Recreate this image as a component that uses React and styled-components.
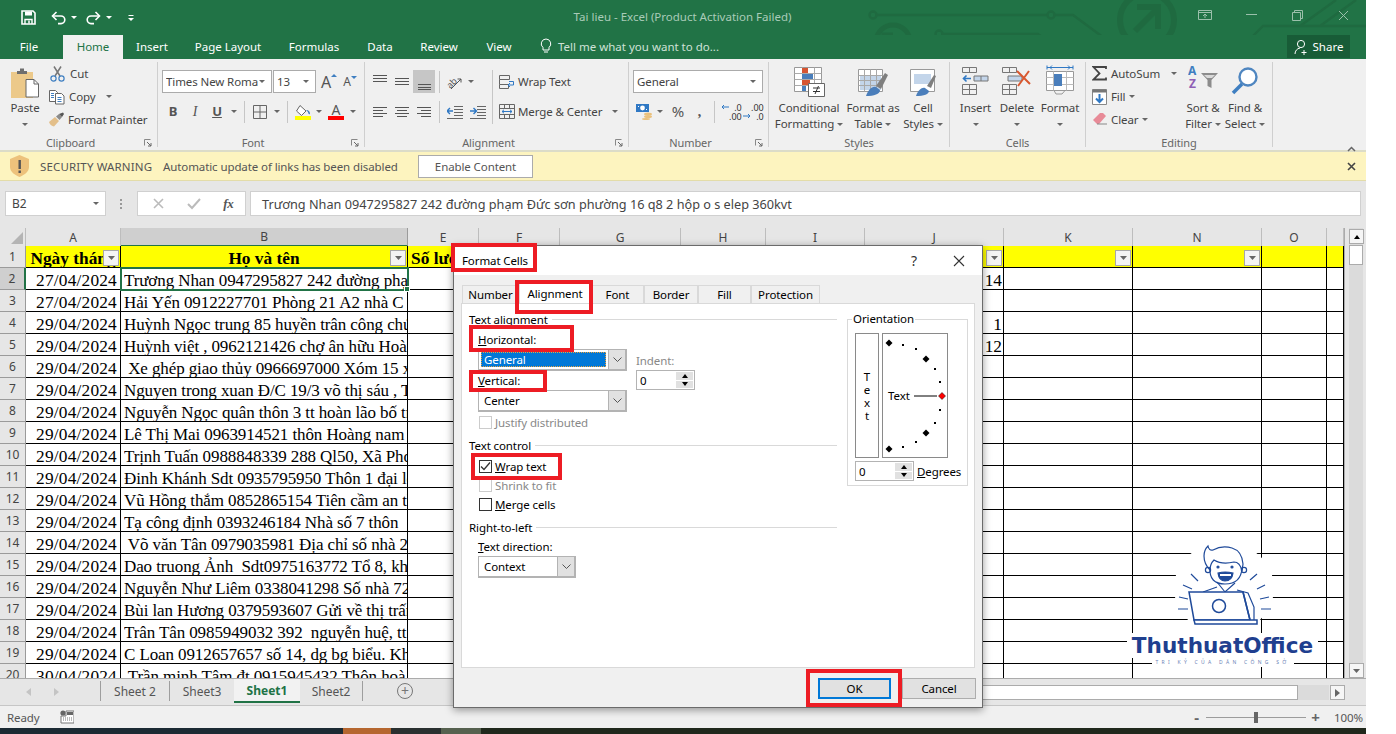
import React from "react";
import styled, { createGlobalStyle } from "styled-components";

const UI = `"Noto Sans", "Open Sans", sans-serif`;
const SERIF = `"Liberation Serif", "Times New Roman", serif`;
const GREEN = "#217346";

const Global = createGlobalStyle`
  html, body { margin: 0; padding: 0; background: #fff; overflow: hidden; }
  * { box-sizing: border-box; }
`;

const Page = styled.div`
  position: relative; width: 1396px; height: 734px; overflow: hidden; background: #fff;
  font-family: ${UI}; font-size: 11.5px; color: #444; letter-spacing: -0.1px;
`;
const Win = styled.div`display: flex; flex-direction: column; width: 1366px; height: 734px; position: relative;`;

/* ---------- title ---------- */
const TitleBar = styled.div`
  position: relative; display: flex; align-items: center; height: 35px; background: ${GREEN}; padding-left: 21px; color: #fff; flex: none;
`;
const QatBtn = styled.div`display: flex; align-items: center; width: ${p => p.$w}px; gap: 5px;`;
const QatCaret = styled.i`width: 0; height: 0; border: 3px solid transparent; border-top: 3px solid #fff; border-bottom: 0;`;
const TitleText = styled.div`
  position: absolute; left: 0; width: 1365px; top: 9px; text-align: center; color: #a9cbb8; font-size: 11.5px; letter-spacing: 0;
`;
const WinControls = styled.div`position: absolute; right: 0; top: 6px; display: flex; align-items: center; height: 18px; opacity: .55;`;
const WinBtn = styled.div`width: ${p => p.$w}px; display: flex; justify-content: center;`;
const Circuit = styled.svg`position: absolute; left: 0; top: 0; pointer-events: none;`;

const TabBar = styled.div`position: relative; display: flex; height: 24px; background: ${GREEN}; color: #fff; font-size: 11.5px; letter-spacing: 0; flex: none;`;
const RTab = styled.div`
  width: ${p => p.$w}px; display: flex; align-items: center; justify-content: center; padding-bottom: 2px;
  background: ${p => (p.$active ? "#f0f0f0" : "transparent")}; color: ${p => (p.$active ? GREEN : "#fff")};
`;
const TellMe = styled.div`display: flex; align-items: center; gap: 6px; margin-left: 13px; color: #cfe2d7; padding-bottom: 2px;`;
const Share = styled.div`
  position: absolute; left: 1287px; top: 0; width: 63px; height: 23px; background: #185c37; display: flex; align-items: center; justify-content: center; gap: 4px;
`;

/* ---------- ribbon ---------- */
const Ribbon = styled.div`display: flex; height: 93px; background: #f0f0f0; padding-top: 3px; border-bottom: 2px solid #dcdcc8; position: relative; flex: none;`;
const Group = styled.div`width: ${p => p.$w}px; height: 85px; border-right: 1px solid #cfcfcf; display: flex; flex-direction: column;`;
const GroupBody = styled.div`display: flex; height: 75px; flex: none; padding-left: ${p => p.$pl || 0}px;`;
const GroupFoot = styled.div`display: flex; align-items: center; height: 13px; flex: none; margin-top: -1px; color: #666; font-size: 11px;`;
const GroupName = styled.div`flex: 1; text-align: center;`;
const Launcher = styled.div`width: 16px; display: flex; justify-content: flex-start; padding-left: 3px;`;
const Collapse = styled.div`position: absolute; left: 1347px; top: 81px;`;

const Large = styled.div`width: ${p => p.$w}px; display: flex; flex-direction: column; align-items: center; flex: none;`;
const LargeIcon = styled.div`height: 38px; padding-top: ${p => p.$pt ?? 5}px; display: flex; justify-content: center;`;
const LargeLine = styled.div`height: 16px; line-height: 16px; display: flex; align-items: center; gap: 3px; white-space: nowrap;`;
const Caret = styled.i`
  display: inline-block; width: 0; height: 0; flex: none; margin-left: ${p => p.$ml || 0}px;
  border-left: 3px solid transparent; border-right: 3px solid transparent; border-top: 3px solid #666;
`;
const Col = styled.div`display: flex; flex-direction: column; width: ${p => (p.$w ? p.$w + "px" : "auto")}; padding-top: ${p => p.$pt || 0}px; margin-left: ${p => p.$ml || 0}px;`;
const SmallRow = styled.div`display: flex; align-items: center; height: ${p => p.$h || 23}px; gap: ${p => p.$gap ?? 4}px; white-space: nowrap; padding-left: ${p => p.$pl || 0}px;`;
const ToolRow = styled.div`display: flex; align-items: center; height: 23px; margin-top: ${p => p.$mt || 0}px;`;
const Tool = styled.div`
  width: ${p => p.$w || 22}px; height: 23px; flex: none; display: flex; align-items: center; justify-content: center; margin-left: ${p => p.$ml || 0}px;
  background: ${p => (p.$on ? "#c6c6c6" : "transparent")};
`;
const ToolSep = styled.div`width: 1px; height: ${p => p.$h || 22}px; background: #c6c6c6; margin: ${p => p.$mt || 0}px ${p => p.$m ?? 4}px 0; flex: none;`;
const Combo = styled.div`
  width: ${p => p.$w}px; height: 23px; flex: none; background: #fff; border: 1px solid #ababab; display: flex; align-items: center;
  justify-content: space-between; padding: 0 6px 0 3px; color: #444; white-space: nowrap; overflow: hidden; margin-right: ${p => p.$mr || 0}px;
`;
const ComboText = styled.span`overflow: hidden; flex: 1;`;
const Glyph = styled.span`
  font-family: ${p => (p.$serif ? SERIF : UI)}; font-weight: ${p => (p.$b ? 700 : 400)}; font-style: ${p => (p.$i ? "italic" : "normal")};
  text-decoration: ${p => (p.$u ? "underline" : "none")}; font-size: ${p => p.$s || 13}px; color: #555; line-height: 1;
`;
const GrowWrap = styled.span`display: flex; align-items: flex-start;`;
const DecGrid = styled.span`
  display: grid; grid-template-columns: 8px 1fr; font-size: 9px; line-height: 9px; color: #333; width: 18px; align-items: center; justify-items: end; letter-spacing: 0;
`;
const ColorStack = styled.span`display: flex; flex-direction: column; align-items: center; width: 16px;`;
const ColorBar = styled.i`display: block; width: 16px; height: 4px; background: #ff0000; margin-top: -1px;`;

/* ---------- warning ---------- */
const Warn = styled.div`
  display: flex; align-items: center; height: 29px; background: #fdf4bf; border-bottom: 1px solid #e3dca8; padding-left: 9px; position: relative; color: #555; font-size: 11.5px; flex: none;
`;
const WarnTitle = styled.span`margin-left: 10px; width: 123px; white-space: nowrap; letter-spacing: .15px;`;
const WarnText = styled.span`width: 255px; white-space: nowrap;`;
const EnableBtn = styled.div`width: 115px; height: 23px; background: #fff; border: 1px solid #ababab; display: flex; align-items: center; justify-content: center;`;
const WarnClose = styled.div`margin-left: auto; margin-right: 10px; display: flex;`;

/* ---------- formula bar ---------- */
const FormulaBar = styled.div`display: flex; align-items: flex-start; height: 47px; background: #e6e6e6; padding: 10px 5px 0; flex: none;`;
const NameBox = styled.div`
  width: 101px; height: 25px; background: #fff; border: 1px solid #d0d0d0; display: flex; align-items: center; justify-content: space-between; padding: 0 6px; font-size: 12px;
`;
const Dots = styled.div`width: 31px; height: 25px; display: flex; align-items: center; justify-content: center;`;
const FxBox = styled.div`
  width: 109px; height: 25px; background: #fff; border: 1px solid #d0d0d0; display: flex; align-items: center; justify-content: space-around; padding: 0 0 0 4px; margin-right: 4px;
`;
const FxText = styled.span`font-family: ${SERIF}; font-style: italic; font-size: 13px; color: #555; font-weight: 700;`;
const FormulaInput = styled.div`
  flex: 1; height: 25px; background: #fff; border: 1px solid #d0d0d0; display: flex; align-items: center; padding-left: 11px; font-size: 12.7px; letter-spacing: 0; white-space: nowrap;
`;

/* ---------- sheet ---------- */
const Sheet = styled.div`display: flex; height: 450px; overflow: hidden; background: #fff; flex: none;`;
const GridArea = styled.div`width: 1344px; overflow: hidden;`;
const COLS = "26px 95px 287px 71px 81px 121px 85px 99px 139px 129px 129px 65px 17px";
const HeadRow = styled.div`display: grid; grid-template-columns: ${COLS}; height: 18px; background: #e6e6e6;`;
const HeadCell = styled.div`
  display: flex; align-items: center; justify-content: center; font-size: 12px; color: #444;
  border-right: 1px solid ${p => (p.$sel ? "#9b9b9b" : "#bdbdbd")}; border-bottom: ${p => (p.$sel ? "2px solid " + GREEN : "1px solid #9b9b9b")};
  background: ${p => (p.$sel ? "#cfcfcf" : "transparent")};
`;
const Corner = styled.div`
  background: #e6e6e6; border-right: 1px solid #bdbdbd; border-bottom: 1px solid #9b9b9b; display: flex; align-items: flex-end; justify-content: flex-end; padding: 0 2px 2px 0;
`;
const CornerMark = styled.i`width: 0; height: 0; border-left: 12px solid transparent; border-bottom: 12px solid #b4b4b4;`;
const Row = styled.div`display: grid; grid-template-columns: ${COLS}; height: 22px;`;
const RowHead = styled.div`
  background: ${p => (p.$sel ? "#cfcfcf" : "#e6e6e6")}; border-bottom: 1px solid #9b9b9b; border-right: ${p => (p.$sel ? "2px solid " + GREEN : "1px solid #9b9b9b")};
  display: flex; align-items: center; justify-content: center; font-size: 12px; color: #444;
`;
const Cell = styled.div`
  position: relative; height: 22px; line-height: 25px; border-right: 1px solid #000; border-bottom: 1px solid #000; overflow: ${p => (p.$sel ? "visible" : "hidden")};
  white-space: pre; font-family: ${SERIF}; font-size: 17.33px; letter-spacing: ${p => p.$ls ?? 0}px; color: #000; padding: 0 ${p => p.$pr ?? 3}px 0 3px;
  text-align: ${p => p.$align || "left"}; font-weight: ${p => (p.$bold ? 700 : 400)};
  background: ${p => (p.$yellow ? "#ffff00" : "#fff")};
  ${p => p.$sel && `outline: 2px solid ${GREEN}; outline-offset: -1px; z-index: 2;`}
`;
const CellClip = styled.div`overflow: hidden; height: 21px; font-size: 17px; letter-spacing: -0.1px;`;
const FillHandle = styled.i`position: absolute; right: -3px; bottom: -3px; width: 6px; height: 6px; background: ${GREEN}; border: 1px solid #fff;`;
const FilterBtn = styled.span`
  position: absolute; right: 1px; top: 4px; width: 16px; height: 16px; background: #f4f4f4; border: 1px solid #a8a8a8; display: flex; align-items: center; justify-content: center; z-index: 1;
`;
const VScroll = styled.div`width: 22px; background: #e6e6e6; padding: 0 3px 0 4px; border-left: 1px solid #ababab;`;
const VTrack = styled.div`height: 100%; background: #dbdbdb; display: flex; flex-direction: column; padding-top: 1px;`;
const VGap = styled.div`flex: 1;`;
const ScrollBtn = styled.div`
  flex: none; width: ${p => p.$w || 15}px; height: 15px; background: #f6f6f6; border: 1px solid #ababab; display: flex; align-items: center; justify-content: center;
`;
const VThumb = styled.div`height: 20px; margin-top: 1px; background: #fff; border: 1px solid #ababab;`;

/* ---------- bottom ---------- */
const SheetTabs = styled.div`display: flex; height: 28px; background: #e6e6e6; border-top: 1px solid #ababab; border-bottom: 1px solid #c6c6c6; position: relative; flex: none;`;
const NavArea = styled.div`width: 100px; display: flex; align-items: center; padding-left: 26px; gap: 23px;`;
const TabSep = styled.div`width: 1px; height: 20px; margin-top: 2px; background: #9e9e9e; flex: none;`;
const SheetTab = styled.div`
  width: ${p => p.$w}px; height: 24px; display: flex; align-items: center; justify-content: center; font-size: 12px; flex: none; letter-spacing: 0;
  color: ${p => (p.$active ? GREEN : "#555")}; font-weight: ${p => (p.$active ? 700 : 400)};
  background: ${p => (p.$active ? "#f2f2f2" : "transparent")}; border-bottom: ${p => (p.$active ? "2px solid " + GREEN : "0")};
`;
const AddSheet = styled.div`margin-left: 34px; margin-top: 4px; width: 16px; height: 16px; border: 1.5px solid #777; border-radius: 50%; display: flex; align-items: center; justify-content: center; color: #777; font-size: 14px; line-height: 1;`;
const HScroll = styled.div`position: absolute; left: 460px; top: 6px; display: flex; width: 885px; height: 15px;`;
const HThumb = styled.div`width: 838px; height: 15px; background: #fff; border: 1px solid #ababab;`;
const HRest = styled.div`flex: 1; background: #dbdbdb; margin-right: 1px;`;

const Status = styled.div`
  display: flex; align-items: center; height: 22px; background: #f0f0f0; padding-left: 7px; font-size: 11.5px; color: #555; position: relative; flex: none;
`;
const StatusMacro = styled.div`margin-left: 20px; display: flex;`;
const ZoomBox = styled.div`position: absolute; left: 1192px; top: 0; height: 22px; display: flex; align-items: center; font-size: 11.5px;`;
const Slider = styled.div`width: 100px; height: 1px; background: #9c9c9c; margin: 0 5px; position: relative;`;
const SliderThumb = styled.i`position: absolute; left: 48px; top: -5px; width: 4px; height: 11px; background: #666;`;
const ZoomSign = styled.span`font-size: 15px; font-weight: 700; color: #666; width: 9px; text-align: center;`;
const ZoomPct = styled.span`margin-left: 14px; color: #555;`;

const Taskbar = styled.div`display: flex; height: 6px; flex: none;`;
const TaskSeg = styled.div`flex: ${p => (p.$w ? "0 0 " + p.$w + "px" : 1)}; background: ${p => p.$c};`;

/* ---------- dialog ---------- */
const Dialog = styled.div`
  position: absolute; left: 453px; top: 245px; width: 530px; height: 463px; background: #f0f0f0; border: 1px solid #6b6b6b; box-shadow: 0 2px 8px rgba(0,0,0,.4);
  color: #000; font-size: 11.5px; display: flex; flex-direction: column; z-index: 5;
`;
const DlgTitle = styled.div`height: 29px; background: #fff; display: flex; align-items: center; padding: 0 17px 0 8px; flex: none;`;
const DlgName = styled.div`flex: 1; font-size: 11.5px;`;
const DlgHelp = styled.div`font-size: 14px; color: #333; margin-right: 36px;`;
const DlgTabs = styled.div`display: flex; align-items: flex-end; height: 28px; padding-left: 8px; flex: none;`;
const DlgTab = styled.div`
  width: ${p => p.$w}px; flex: none; display: flex; align-items: center; justify-content: center;
  height: ${p => (p.$active ? 21 : 18)}px; background: ${p => (p.$active ? "#fff" : "#f0f0f0")};
  border: 1px solid #d9d9d9; border-bottom: 0;
`;
const Pane = styled.div`
  margin-left: 7px; width: 514px; height: 365px; background: #fff; border: 1px solid #d9d9d9; padding: 7px 7px 0 7px; display: flex; flex: none;
`;
const PaneLeft = styled.div`width: 368px; flex: none;`;
const Legend = styled.div`display: flex; align-items: center; height: 16px; gap: 4px; margin-top: ${p => p.$mt || 0}px;`;
const LegendLine = styled.i`flex: 1; height: 1px; background: #d9d9d9;`;
const Lbl = styled.div`
  height: 16px; line-height: 16px; padding-left: ${p => p.$pl ?? 9}px; margin-top: ${p => p.$mt || 0}px; color: ${p => (p.$dis ? "#888" : "#000")}; white-space: nowrap;
`;
const FieldRow = styled.div`display: flex; align-items: flex-start; height: 24px;`;
const Select = styled.div`
  width: ${p => p.$w}px; height: 22px; margin-left: 9px; margin-top: ${p => p.$mt || 0}px; border: 2px solid #b3b3b3; border-width: 1px 2px 2px 1px; display: flex; align-items: stretch; background: #fff; flex: none;
`;
const SelectText = styled.div`
  flex: 1; margin: 2px; display: flex; align-items: center; padding-left: 3px;
  ${p => p.$hl && "background:#0078d7;color:#fff;outline:1px dotted #e8a33d;outline-offset:-1px;"}
`;
const SelectArrow = styled.div`width: 17px; background: #e1e1e1; border-left: 1px solid #b3b3b3; display: flex; align-items: center; justify-content: center;`;
const Spin = styled.div`
  width: ${p => p.$w}px; height: 20px; border: 1px solid #b3b3b3; background: #fff; display: flex; align-items: stretch; flex: none; padding-left: 3px; margin-top: ${p => p.$mt || 0}px;
`;
const SpinVal = styled.div`flex: 1; display: flex; align-items: center;`;
const SpinBtns = styled.div`width: 17px; display: flex; flex-direction: column; margin: 1px; gap: 1px;`;
const SpinBtn = styled.div`flex: 1; background: #e1e1e1; display: flex; align-items: center; justify-content: center;`;
const Arrow = styled.i`
  width: 0; height: 0; border-left: 3.5px solid transparent; border-right: 3.5px solid transparent;
  ${p => (p.$up ? "border-bottom: 4px solid #000;" : "border-top: 4px solid #000;")}
`;
const IndentCol = styled.div`margin-left: 9px; margin-top: 5px;`;
const CheckRow = styled.div`display: flex; align-items: center; gap: 3px; height: 19px; padding-left: 10px; margin-top: ${p => p.$mt || 0}px; color: ${p => (p.$dis ? "#888" : "#000")};`;
const Check = styled.div`width: 13px; height: 13px; border: 1px solid ${p => (p.$dis ? "#ccc" : "#333")}; background: #fff; display: flex; align-items: center; justify-content: center; flex: none;`;
const OrientBox = styled.div`position: relative; margin-left: 10px; margin-top: 8px; width: 121px; height: 167px; border: 1px solid #d9d9d9; padding: 13px 7px 0;`;
const OrientLegend = styled.div`position: absolute; left: 4px; top: -9px; background: #fff; padding: 0 1px;`;
const OrientTop = styled.div`display: flex; gap: 3px;`;
const VertText = styled.div`
  width: 24px; height: 125px; border: 1px solid #8a8a8a; display: flex; flex-direction: column; align-items: center; justify-content: center; line-height: 13px;
`;
const Dial = styled.svg`display: block; width: 66px; height: 125px; border: 1px solid #8a8a8a;`;
const DegRow = styled.div`display: flex; align-items: center; gap: 3px; margin-top: 3px;`;
const DlgFoot = styled.div`flex: 1; display: flex; justify-content: flex-end; padding: 10px 6px 0 0; gap: 11px;`;
const DlgBtn = styled.div`
  width: ${p => p.$w}px; height: 21px; background: #e1e1e1; border: ${p => (p.$def ? "2px solid #0078d7" : "1px solid #adadad")}; display: flex; align-items: center; justify-content: center;
`;

/* ---------- annotation ---------- */
const Mark = styled.div`
  position: absolute; left: ${p => p.$x}px; top: ${p => p.$y}px; width: ${p => p.$w}px; height: ${p => p.$h}px; border: 4px solid #ed1c24; z-index: 6;
`;

/* ---------- logo ---------- */
const Logo = styled.div`position: absolute; left: 1127px; top: 540px; width: 191px; display: flex; flex-direction: column; align-items: center; z-index: 3; color: #1f3f8f;`;
const LogoArt = styled.svg`display: block;`;
const LogoWord = styled.div`
  width: 191px; height: 25px; line-height: 25px; margin-top: 1px; text-align: center; background: #fff; font-family: "DejaVu Sans", sans-serif; font-weight: 700; font-size: 21.6px; letter-spacing: 0; white-space: nowrap;
`;
const LogoTag = styled.div`
  width: 142px; height: 9px; line-height: 9px; background: #fff; text-align: center; font-family: "Noto Sans", sans-serif; font-size: 5px; letter-spacing: 3.3px; color: #6a7fb5; white-space: nowrap;
`;

/* ---------- icons ---------- */
const Svg = ({ w = 16, h = 16, children }) => <svg width={w} height={h} viewBox={`0 0 ${w} ${h}`} fill="none">{children}</svg>;

const Lines = ({ rows, w = 16, h = 16, c = "#555" }) => (
  <Svg w={w} h={h}>{rows.map((r, i) => <path key={i} d={`M${r[0]} ${r[2]}.5H${r[1]}`} stroke={r[3] || c} />)}</Svg>
);
const SaveIc = () => (
  <Svg w={15} h={15}>
    <path d="M1 1h11l2 2v11H1z" stroke="#fff" strokeWidth="1.6" />
    <path d="M4 1.5h7v4H4z" fill="#fff" /><path d="M4 14V9.5h7V14" stroke="#fff" strokeWidth="1.4" /><path d="M8 10.5v3" stroke="#fff" strokeWidth="1.5" />
  </Svg>
);
const FlipSvg = styled.svg`transform: ${p => (p.$flip ? "scaleX(-1)" : "none")};`;
const UndoIc = ({ flip }) => (
  <FlipSvg $flip={flip} width="15" height="14" viewBox="0 0 15 14" fill="none">
    <path d="M2 5h8a3.6 3.6 0 0 1 0 7.6H7" stroke="#fff" strokeWidth="1.6" /><path d="M5.5 1 1.5 5l4 4" stroke="#fff" strokeWidth="1.6" />
  </FlipSvg>
);
const QatMore = () => <Svg w={8} h={8}><path d="M1.5 1.5h5" stroke="#fff" /><path d="M1 4h6L4 7z" fill="#fff" /></Svg>;
const PasteIc = () => (
  <Svg w={30} h={32}>
    <path d="M1 5h22v26H1z" fill="#ecc98a" /><path d="M7 4h3V1.5h4V4h3v3H7z" fill="#6e6e6e" />
    <path d="M16 12.5h8l4.5 4.5v13H16z" fill="#fff" stroke="#666" /><path d="M24 12.5V17h4.5" stroke="#666" />
  </Svg>
);
const CutIc = () => (
  <Svg w={15} h={16}>
    <path d="M4 0.5 10 10M11 0.5 5 10" stroke="#777" strokeWidth="1.5" />
    <circle cx="3.5" cy="12.5" r="2.6" stroke="#3f7fc1" strokeWidth="1.2" /><circle cx="11.5" cy="12.5" r="2.6" stroke="#3f7fc1" strokeWidth="1.2" />
  </Svg>
);
const CopyIc = () => (
  <Svg w={16} h={16}>
    <path d="M.5 1.5h6l2 2v9H.5z" fill="#fff" stroke="#666" /><path d="M6.5 4.5h6l2.5 2.5v8H6.5z" fill="#fff" stroke="#666" />
    <path d="M8.5 8.5h4M8.5 10.5h4M8.5 12.5h4" stroke="#3f7fc1" /><path d="M2 4.5h3M2 6.5h3M2 8.5h3" stroke="#3f7fc1" />
  </Svg>
);
const PainterIc = () => (
  <Svg w={17} h={15}>
    <path d="M1 10 7 5l4 4-5 5.5C4 14 2 13 1 10z" fill="#e3bf8a" /><path d="M8 4.5 11 2l3 3-2.5 3z" fill="#8a8a8a" /><path d="M11 2 15 .5l1 1.5-2 3z" fill="#555" />
  </Svg>
);
const LaunchIc = () => <Svg w={8} h={8}><path d="M.5 6.5v-6h6" stroke="#888" /><path d="M3 3l4 4M7 4v3H4" stroke="#666" /></Svg>;
const GrowA = ({ down }) => (
  <GrowWrap>
    <Glyph $s={down ? 12 : 16}>A</Glyph>
    <Svg w={6} h={4}><path d={down ? "M0 0h6L3 3z" : "M0 3h6L3 0z"} fill="#3f7fc1" /></Svg>
  </GrowWrap>
);
const BordersIc = () => <Svg w={14} h={14}><path d="M.5.5h13v13H.5zM7 .5v13M.5 7h13" stroke="#666" /></Svg>;
const FillIc = () => (
  <Svg w={17} h={16}>
    <path d="M5 1.5 11 7l-4.5 4.5L1.5 7z" fill="#fff" stroke="#666" /><path d="M11 6c3 0 4 2 4 4-1 1-2-1-2-2" fill="#3f7fc1" />
    <rect x="0" y="12" width="16" height="4" fill="#ffff00" />
  </Svg>
);
const ColorIc = () => <ColorStack><Glyph $s={14}>A</Glyph><ColorBar /></ColorStack>;
const OrientIc = () => (
  <Svg w={18} h={16}>
    <text x="1" y="13" fontSize="9" fill="#555" fontFamily="Noto Sans" transform="rotate(-45 5 10)">ab</text>
    <path d="M5 15 15 5M15 5h-3.5M15 5v3.5" stroke="#555" />
  </Svg>
);
const IndentDec = () => (
  <Svg w={16} h={14}><path d="M7 1.5h9M7 4.5h9M7 7.5h9M7 10.5h9" stroke="#666" /><path d="M0 13.5h16" stroke="#666" /><path d="M0 6h6M3 3 0 6l3 3" stroke="#2f78c4" strokeWidth="1.4" /></Svg>
);
const IndentInc = () => (
  <Svg w={16} h={14}><path d="M7 1.5h9M7 4.5h9M7 7.5h9M7 10.5h9" stroke="#666" /><path d="M0 13.5h16" stroke="#666" /><path d="M0 6h6M3.5 3 6.5 6l-3 3" stroke="#2f78c4" strokeWidth="1.4" /></Svg>
);
const WrapIc = () => (
  <Svg w={16} h={16}>
    <path d="M.5 1.5h10v4H.5zM.5 10.5h9v4H.5z" stroke="#666" /><path d="M.5 5.5v5" stroke="#666" />
    <path d="M10 7.5h4.5V11H9M11 9l-2 2 2 2" stroke="#2f78c4" />
  </Svg>
);
const MergeIc = () => (
  <Svg w={16} h={15}>
    <path d="M.5.5h15v14H.5zM.5 4.5h15M.5 10.5h15M5.5.5v4M10.5.5v4M5.5 10.5v4M10.5 10.5v4" stroke="#666" />
    <path d="M3 7.5h10M5 5.8 3 7.5l2 1.7M11 5.8l2 1.7-2 1.7" stroke="#2f78c4" />
  </Svg>
);
const CurrencyIc = () => (
  <Svg w={17} h={17}>
    <path d="M0 1h13v8H0z" fill="#2f78c4" /><circle cx="6.5" cy="5" r="2.4" fill="#fff" /><path d="M2 3h1v1H2zM10 6h1v1h-1z" fill="#fff" />
    <ellipse cx="12" cy="11" rx="4" ry="1.6" fill="#eac17d" /><ellipse cx="12" cy="13.5" rx="4" ry="1.6" fill="#eac17d" /><ellipse cx="10" cy="16" rx="4" ry="1" fill="#eac17d" />
  </Svg>
);
const DecIc = ({ more }) => (
  <DecGrid>
    {more
      ? <><i /><span>.00</span><Svg w={8} h={6}><path d="M0 3h7M5 1l2 2-2 2" stroke="#2f78c4" /></Svg><span>.0</span></>
      : <><Svg w={8} h={6}><path d="M1 3h7M3 1 1 3l2 2" stroke="#2f78c4" /></Svg><span>.0</span><i /><span>.00</span></>}
  </DecGrid>
);
const CondIc = () => (
  <Svg w={31} h={30}>
    <path d="M.5.5h27v24H.5z" fill="#fff" stroke="#999" />
    <path d="M.5 6.5h27M.5 12.5h27M.5 18.5h27M8.5.5v24M20.5.5v24" stroke="#aaa" />
    <path d="M8 1h6v5H8zM8 13h8v5H8z" fill="#d65532" /><path d="M8 7h11v5H8zM8 19h4v5H8z" fill="#4a7ebb" />
    <path d="M14.5 16.5h16v13h-16z" fill="#fff" stroke="#666" /><path d="M19 21h7M19 24.5h7M24.5 19l-3.5 8" stroke="#333" />
  </Svg>
);
const TableIc = () => (
  <Svg w={31} h={30}>
    <path d="M.5 2.5h24v22H.5z" fill="#fff" stroke="#999" /><path d="M2 9h21v14H2z" fill="#c3d5ea" />
    <path d="M.5 8.5h24M.5 13.5h24M.5 18.5h24M6.5 2.5v22M12.5 2.5v22M18.5 2.5v22" stroke="#a9a9a9" />
    <path d="M18 19 27 6l3 2-7 14z" fill="#7f7f7f" /><path d="M8 29c2-6 6-10 10-9l4 3c0 4-6 6-14 6z" fill="#4a7ebb" />
  </Svg>
);
const StylesIc = () => (
  <Svg w={26} h={30}>
    <path d="M.5 2.5h24v22H.5z" fill="#fff" stroke="#999" /><path d="M4 7h17v10H4z" fill="#c3d5ea" />
    <path d="M17 19 24 8l2 1-5 12z" fill="#7f7f7f" /><path d="M6 29c2-6 6-9 9-8l4 3c0 3-5 5-13 5z" fill="#4a7ebb" />
  </Svg>
);
const InsertIc = () => (
  <Svg w={27} h={28}>
    <path d="M.5.5h14v5H.5zM7.5.5v5M.5 17.5h14v10H.5zM.5 22.5h14M7.5 17.5v10" stroke="#777" />
    <path d="M12 9h14v5H12zM19 9v5" fill="#c3d5ea" stroke="#777" /><path d="M1 11.5h8M4.5 8.5l-3 3 3 3" stroke="#2f78c4" strokeWidth="1.6" />
  </Svg>
);
const DeleteIc = () => (
  <Svg w={30} h={28}>
    <path d="M.5.5h14v5H.5zM7.5.5v5M.5 17.5h14v10H.5zM.5 22.5h14M7.5 17.5v10" stroke="#777" />
    <path d="M6 9h14v5H6z" fill="#c3d5ea" stroke="#777" />
    <path d="M15 4 28 17M27 4 16 19" stroke="#d9582f" strokeWidth="2" />
  </Svg>
);
const FormatIc = () => (
  <Svg w={28} h={30}>
    <path d="M1 2.5h26M1 .5v4M27 .5v4M4 2.5l2-2M4 2.5l2 2M24 2.5l-2-2M24 2.5l-2 2" stroke="#2f78c4" />
    <path d="M.5 6.5h27v19H.5z" fill="#fff" stroke="#999" /><path d="M7.5 6.5v19M20.5 6.5v19M.5 12.5h27M.5 19.5h27" stroke="#bbb" />
    <path d="M8 9h8v12H8z" fill="#4a7ebb" /><path d="M8 25.5 10 29h6l3-3.5" stroke="#999" />
  </Svg>
);
const SigmaIc = () => <Svg w={15} h={15}><path d="M14 3V1H1.5l6 6.5-6 6H14v-2" stroke="#444" strokeWidth="1.8" /></Svg>;
const FillDownIc = () => (
  <Svg w={15} h={16}><path d="M.5.5h14v15H.5z" fill="#fff" stroke="#888" /><path d="M.5.5h14v3H.5z" fill="#777" /><path d="M7.5 5v8M4 9.5l3.5 3.5L11 9.5" stroke="#2f78c4" strokeWidth="2" /></Svg>
);
const EraserIc = () => (
  <Svg w={15} h={14}><path d="M1 8 8 1h3l3 3-7 8H5z" fill="#e88b98" /><path d="M5 12h10" stroke="#888" /></Svg>
);
const SortIc = () => (
  <Svg w={31} h={24}>
    <text x="0" y="10" fontSize="12" fontWeight="700" fill="#3f7fc1" fontFamily="Noto Sans">A</text>
    <text x="1" y="23" fontSize="12" fontWeight="700" fill="#8e5fb5" fontFamily="Noto Sans">Z</text>
    <path d="M13 8h17l-6.5 7v8l-4-2v-6z" fill="#8c8c8c" /><path d="M16 10h11l-3 3h-5z" fill="#d9d9d9" />
  </Svg>
);
const FindIc = () => (
  <Svg w={28} h={28}><circle cx="17" cy="10" r="8.5" fill="#fff" stroke="#4f86c0" strokeWidth="2.4" /><path d="M11 17 2 26" stroke="#3f7fc1" strokeWidth="3.5" /></Svg>
);
const ShieldIc = () => (
  <Svg w={21} h={22}>
    <path d="M10.5 0 20 4v8c0 5-5 8-9.5 10C6 20 1 17 1 12V4z" fill="#edc27c" />
    <path d="M9.5 5h2.4v9H9.5zM9.5 15.5h2.4V18H9.5z" fill="#555" />
  </Svg>
);
const X = ({ s = 10, c = "#555", w = 1.4 }) => <Svg w={s} h={s}><path d={`M1 1 ${s - 1} ${s - 1}M${s - 1} 1 1 ${s - 1}`} stroke={c} strokeWidth={w} /></Svg>;
const Tick = ({ c = "#bbb" }) => <Svg w={14} h={12}><path d="M1 6l4 4 8-9" stroke={c} strokeWidth="2" /></Svg>;
const SmallTick = () => <Svg w={11} h={9}><path d="M1 4.5l3 3 6-7" stroke="#333" strokeWidth="1.3" /></Svg>;
const Bulb = () => <Svg w={12} h={16}><path d="M6 1a4.8 4.8 0 0 0-3 8.5V12h6V9.5A4.8 4.8 0 0 0 6 1zM4 14h4" stroke="#fff" /></Svg>;
const ShareIc = () => <Svg w={15} h={16}><circle cx="7" cy="5" r="3.6" stroke="#fff" /><path d="M1 15c0-3 2-5.5 5-6M10 11v5M7.5 13.5h5" stroke="#fff" /></Svg>;
const MiniCaret = () => <Svg w={7} h={4}><path d="M0 0h7L3.5 4z" fill="#666" /></Svg>;
const SideCaret = ({ left, c = "#666" }) => <Svg w={5} h={8}><path d={left ? "M5 0v8L0 4z" : "M0 0v8l5-4z"} fill={c} /></Svg>;
const Chevron = () => <Svg w={9} h={5}><path d="M.5.5 4.5 4.5l4-4" stroke="#555" /></Svg>;
const CollapseIc = () => <Svg w={9} h={6}><path d="M1 5l3.5-3.5L8 5" stroke="#666" strokeWidth="1.5" /></Svg>;
const MacroIc = () => (
  <Svg w={14} h={14}><circle cx="3" cy="3" r="2.6" fill="#666" /><path d="M6 1h8v12H1V6h5z" fill="#fff" stroke="#777" /><path d="M3 8h9M3 10h9" stroke="#777" strokeDasharray="1 1" /><path d="M7 2h6v3H7z" fill="#666" /></Svg>
);

const CircuitArt = () => (
  <Circuit width="1366" height="52" viewBox="0 0 1366 52" fill="none" stroke="#1f6a40" strokeWidth="2.4">
    <circle cx="873" cy="15" r="3.5" /><path d="M877 15h170M1055 15h18l50 37" />
    <circle cx="1051" cy="15" r="3.5" />
    <circle cx="939" cy="34" r="3.5" /><path d="M943 34h95l24 18" />
    <path d="M976 52l13-9h87M1084 43h16l18 9" /><circle cx="1080" cy="44" r="3.5" />
    <circle cx="893" cy="42" r="17" strokeWidth="5" /><path d="M885 35l14 14M884 44v-9h9" strokeWidth="5" />
    <circle cx="1147" cy="20" r="27" strokeWidth="6" /><path d="M1135 31l23-23M1137 7h21v22" strokeWidth="6" />
    <path d="M1237 52l26-26h103M1320 26l36-26M1300 26l36-26" />
  </Circuit>
);

const LogoGraphic = () => (
  <LogoArt width="191" height="92" viewBox="-3 0 191 92" fill="none" stroke="#1f4a9a" strokeWidth="1.2">
    <ellipse cx="94" cy="48" rx="50" ry="46" fill="#fff" stroke="none" />
    <path d="M74 16Q74 10 78 6Q79 11 83 10Q92 5 102 8Q112 11 113 24L112 31Q110 22 104 22Q92 25 84 20Q80 24 80 30Q74 24 74 16Z" fill="#fff" />
    <path d="M80 28Q79 44 95 44Q111 44 112 28" />
    <circle cx="78" cy="30" r="2.6" /><circle cx="114" cy="30" r="2.6" />
    <path d="M88 33Q95 31 103 33Q102 41 95 41Q89 41 88 33Z" fill="#1f4a9a" /><path d="M90 34h11v2H90z" fill="#fff" stroke="none" />
    <circle cx="88" cy="27" r="1" fill="#1f4a9a" /><circle cx="102" cy="27" r="1" fill="#1f4a9a" />
    <path d="M87 42l8 10 10-9M73 52l14-5M107 50l11 3 6 14v16" />
    <path d="M59 52h54l7 28H64z" fill="#fff" strokeWidth="1.5" /><path d="M64 80h63v4H65z" fill="#fff" strokeWidth="1.5" />
    <path d="M113 52l7 28" strokeWidth="1.5" /><circle cx="89" cy="66" r="6.5" strokeWidth="1.5" />
    <path d="M61 34l7 7M53 45l9 4M49 57l9 2M48 69h10M127 34l-7 6M135 45l-8 4M139 57l-9 2M141 69h-10" />
  </LogoArt>
);

/* ---------- data ---------- */
const people = [
  ["27/04/2024", "Trương Nhan 0947295827 242 đường phạm Đức sơn phường 16 q8 2 hộp o s elep 360kvt", "14"],
  ["27/04/2024", "Hải Yến 0912227701 Phòng 21 A2 nhà C", ""],
  ["29/04/2024", "Huỳnh Ngọc trung 85 huyền trân công chúa", "1"],
  ["29/04/2024", "Huỳnh việt , 0962121426 chợ ân hữu Hoài", "12"],
  ["29/04/2024", " Xe ghép giao thủy 0966697000 Xóm 15 xã", ""],
  ["29/04/2024", "Nguyen trong xuan Đ/C 19/3 võ thị sáu , TP", ""],
  ["29/04/2024", "Nguyễn Ngọc quân thôn 3 tt hoàn lão bố trạch", ""],
  ["29/04/2024", "Lê Thị Mai 0963914521 thôn Hoàng nam", ""],
  ["29/04/2024", "Trịnh Tuấn 0988848339 288 Ql50, Xã Phong", ""],
  ["29/04/2024", "Đinh Khánh Sdt 0935795950 Thôn 1 đại lộc", ""],
  ["29/04/2024", "Vũ Hồng thắm 0852865154 Tiên cầm an thi", ""],
  ["29/04/2024", "Tạ công định 0393246184 Nhà số 7 thôn", ""],
  ["29/04/2024", " Võ văn Tân 0979035981 Địa chỉ số nhà 2", ""],
  ["29/04/2024", "Dao truong Ảnh  Sdt0975163772 Tổ 8, khu", ""],
  ["29/04/2024", "Nguyễn Như Liêm 0338041298 Số nhà 72", ""],
  ["29/04/2024", "Bùi lan Hương 0379593607 Gửi về thị trấn", ""],
  ["29/04/2024", "Trân Tân 0985949032 392  nguyễn huệ, tt", ""],
  ["29/04/2024", "C Loan 0912657657 số 14, dg bg biểu. Khu", ""],
  ["30/04/2024", " Trần minh Tâm đt 0915945432 Thôn hoà", ""],
];
const colNames = ["A", "B", "E", "F", "G", "H", "I", "J", "K", "N", "O", ""];
const marks = [
  [451, 243, 86, 29], [515, 280, 78, 34], [469, 325, 105, 27], [469, 370, 78, 22], [471, 453, 91, 27], [806, 669, 96, 38],
];
const dots = [[20, 11], [33, 15], [52, 35], [57, 48], [57, 76], [52, 89], [33, 108], [20, 113]];
const diamonds = [[6, 9], [43, 25], [43, 99], [6, 115]];

const Filter = () => <FilterBtn><MiniCaret /></FilterBtn>;

export default function App() {
  return (
    <Page>
      <Global />
      <Win>
        <TitleBar>
          <CircuitArt />
          <QatBtn $w={30}><SaveIc /></QatBtn>
          <QatBtn $w={35}><UndoIc /><QatCaret /></QatBtn>
          <QatBtn $w={41}><UndoIc flip /><QatCaret /></QatBtn>
          <QatBtn $w={12}><QatMore /></QatBtn>
          <TitleText>Tai lieu - Excel (Product Activation Failed)</TitleText>
          <WinControls>
            <WinBtn $w={46}><Svg w={14} h={10}><path d="M.5.5h13v9H.5zM.5 2.5h13M7 8V4M5 6l2-2 2 2" stroke="#fff" /></Svg></WinBtn>
            <WinBtn $w={46}><Svg w={11} h={2}><path d="M0 .5h11" stroke="#fff" /></Svg></WinBtn>
            <WinBtn $w={46}><Svg w={11} h={11}><path d="M.5 2.5h8v8h-8zM2.5 2.5v-2h8v8h-2" stroke="#fff" /></Svg></WinBtn>
            <WinBtn $w={46}><X s={11} c="#fff" w={1} /></WinBtn>
          </WinControls>
        </TitleBar>
        <TabBar>
          <RTab $w={58}>File</RTab>
          <RTab $w={5} />
          <RTab $w={60} $active>Home</RTab>
          <RTab $w={58}>Insert</RTab>
          <RTab $w={94}>Page Layout</RTab>
          <RTab $w={78}>Formulas</RTab>
          <RTab $w={54}>Data</RTab>
          <RTab $w={64}>Review</RTab>
          <RTab $w={56}>View</RTab>
          <TellMe><Bulb />Tell me what you want to do...</TellMe>
          <Share><ShareIc />Share</Share>
        </TabBar>
        <Ribbon>
          <Group $w={158}>
            <GroupBody $pl={2}>
              <Large $w={46}>
                <LargeIcon $pt={5}><PasteIc /></LargeIcon>
                <LargeLine>Paste</LargeLine>
                <LargeLine><Caret /></LargeLine>
              </Large>
              <Col>
                <SmallRow $h={23} $gap={5} $pl={2}><CutIc />Cut</SmallRow>
                <SmallRow $h={23} $gap={4} $pl={1}><CopyIc />Copy<Caret $ml={6} /></SmallRow>
                <SmallRow $h={22} $gap={3} $pl={0}><PainterIc />Format Painter</SmallRow>
              </Col>
            </GroupBody>
            <GroupFoot><GroupName>Clipboard</GroupName><Launcher><LaunchIc /></Launcher></GroupFoot>
          </Group>

          <Group $w={207}>
            <GroupBody $pl={4}>
              <Col $pt={8}>
                <ToolRow>
                  <Combo $w={110} $mr={1}><ComboText>Times New Roma</ComboText><Caret /></Combo>
                  <Combo $w={43}><ComboText>13</ComboText><Caret /></Combo>
                  <Tool $w={22} $ml={2}><GrowA /></Tool>
                  <Tool $w={20}><GrowA down /></Tool>
                </ToolRow>
                <ToolRow $mt={7}>
                  <Tool><Glyph $b $s={13}>B</Glyph></Tool>
                  <Tool><Glyph $i $serif $s={14}>I</Glyph></Tool>
                  <Tool><Glyph $u $b $s={13}>U</Glyph></Tool>
                  <Tool $w={12}><Caret /></Tool>
                  <ToolSep />
                  <Tool><BordersIc /></Tool>
                  <Tool $w={12}><Caret /></Tool>
                  <ToolSep />
                  <Tool><FillIc /></Tool>
                  <Tool $w={10}><Caret /></Tool>
                  <Tool $w={24}><ColorIc /></Tool>
                  <Tool $w={10}><Caret /></Tool>
                </ToolRow>
              </Col>
            </GroupBody>
            <GroupFoot><GroupName>Font</GroupName><Launcher><LaunchIc /></Launcher></GroupFoot>
          </Group>

          <Group $w={264}>
            <GroupBody $pl={4}>
              <Col $pt={8}>
                <ToolRow>
                  <Tool><Lines rows={[[1, 15, 1], [1, 15, 4], [1, 15, 7]]} /></Tool>
                  <Tool><Lines rows={[[1, 15, 4], [1, 15, 7], [1, 15, 10]]} /></Tool>
                  <Tool $on><Lines rows={[[2, 15, 10], [2, 15, 13], [2, 15, 15]]} /></Tool>
                  <ToolSep />
                  <Tool><OrientIc /></Tool>
                  <Tool $w={10}><Caret /></Tool>
                </ToolRow>
                <ToolRow $mt={7}>
                  <Tool><Lines rows={[[1, 15, 3], [1, 11, 6], [1, 15, 9], [1, 11, 12]]} /></Tool>
                  <Tool><Lines rows={[[1, 15, 3], [3, 13, 6], [1, 15, 9], [3, 13, 12]]} /></Tool>
                  <Tool><Lines rows={[[1, 15, 3], [5, 15, 6], [1, 15, 9], [5, 15, 12]]} /></Tool>
                  <ToolSep />
                  <Tool><IndentDec /></Tool>
                  <Tool $w={23}><IndentInc /></Tool>
                </ToolRow>
              </Col>
              <ToolSep $h={54} $m={3} $mt={8} />
              <Col $pt={8} $ml={3}>
                <ToolRow><SmallRow $gap={3}><WrapIc />Wrap Text</SmallRow></ToolRow>
                <ToolRow $mt={7}><SmallRow $gap={3}><MergeIc />Merge &amp; Center<Caret $ml={7} /></SmallRow></ToolRow>
              </Col>
            </GroupBody>
            <GroupFoot><GroupName>Alignment</GroupName><Launcher><LaunchIc /></Launcher></GroupFoot>
          </Group>

          <Group $w={140}>
            <GroupBody $pl={4}>
              <Col $pt={8}>
                <ToolRow><Combo $w={130}><ComboText>General</ComboText><Caret /></Combo></ToolRow>
                <ToolRow $mt={7}>
                  <Tool><CurrencyIc /></Tool>
                  <Tool $w={10}><Caret /></Tool>
                  <Tool $ml={2}><Glyph $s={15}>%</Glyph></Tool>
                  <Tool $w={21}><Glyph $b $s={14} $serif>,</Glyph></Tool>
                  <ToolSep />
                  <Tool><DecIc /></Tool>
                  <Tool><DecIc more /></Tool>
                </ToolRow>
              </Col>
            </GroupBody>
            <GroupFoot><GroupName>Number</GroupName><Launcher><LaunchIc /></Launcher></GroupFoot>
          </Group>

          <Group $w={181}>
            <GroupBody $pl={1}>
              <Large $w={78}><LargeIcon><CondIc /></LargeIcon><LargeLine>Conditional</LargeLine><LargeLine>Formatting<Caret /></LargeLine></Large>
              <Large $w={50}><LargeIcon><TableIc /></LargeIcon><LargeLine>Format as</LargeLine><LargeLine>Table<Caret /></LargeLine></Large>
              <Large $w={50}><LargeIcon><StylesIc /></LargeIcon><LargeLine>Cell</LargeLine><LargeLine>Styles<Caret /></LargeLine></Large>
            </GroupBody>
            <GroupFoot><GroupName>Styles</GroupName></GroupFoot>
          </Group>

          <Group $w={136}>
            <GroupBody $pl={5}>
              <Large $w={41}><LargeIcon><InsertIc /></LargeIcon><LargeLine>Insert</LargeLine><LargeLine><Caret /></LargeLine></Large>
              <Large $w={42}><LargeIcon><DeleteIc /></LargeIcon><LargeLine>Delete</LargeLine><LargeLine><Caret /></LargeLine></Large>
              <Large $w={44}><LargeIcon $pt={3}><FormatIc /></LargeIcon><LargeLine>Format</LargeLine><LargeLine><Caret /></LargeLine></Large>
            </GroupBody>
            <GroupFoot><GroupName>Cells</GroupName></GroupFoot>
          </Group>

          <Group $w={187}>
            <GroupBody $pl={6}>
              <Col $w={90}>
                <SmallRow $gap={4}><SigmaIc />AutoSum<Caret $ml={7} /></SmallRow>
                <SmallRow $gap={4}><FillDownIc />Fill<Caret /></SmallRow>
                <SmallRow $gap={4} $h={22}><EraserIc />Clear<Caret /></SmallRow>
              </Col>
              <Large $w={42}><LargeIcon $pt={3}><SortIc /></LargeIcon><LargeLine>Sort &amp;</LargeLine><LargeLine>Filter<Caret /></LargeLine></Large>
              <Large $w={42}><LargeIcon $pt={5}><FindIc /></LargeIcon><LargeLine>Find &amp;</LargeLine><LargeLine>Select<Caret /></LargeLine></Large>
            </GroupBody>
            <GroupFoot><GroupName>Editing</GroupName></GroupFoot>
          </Group>
          <Collapse><CollapseIc /></Collapse>
        </Ribbon>

        <Warn>
          <ShieldIc />
          <WarnTitle>SECURITY WARNING</WarnTitle>
          <WarnText>Automatic update of links has been disabled</WarnText>
          <EnableBtn>Enable Content</EnableBtn>
          <WarnClose><X s={9} c="#444" w={1.6} /></WarnClose>
        </Warn>

        <FormulaBar>
          <NameBox>B2<Caret /></NameBox>
          <Dots><Svg w={3} h={12}><path d="M0 1h2v2H0zM0 5h2v2H0zM0 9h2v2H0z" fill="#999" /></Svg></Dots>
          <FxBox><X s={11} c="#bbb" w={1.6} /><Tick /><FxText>fx</FxText></FxBox>
          <FormulaInput>Trương Nhan 0947295827 242 đường phạm Đức sơn phường 16 q8 2 hộp o s elep 360kvt</FormulaInput>
        </FormulaBar>

        <Sheet>
          <GridArea>
            <HeadRow>
              <Corner><CornerMark /></Corner>
              {colNames.map((c, i) => <HeadCell key={i} $sel={c === "B"}>{c}</HeadCell>)}
            </HeadRow>
            <Row>
              <RowHead>1</RowHead>
              <Cell $yellow $bold $align="center">Ngày tháng<Filter /></Cell>
              <Cell $yellow $bold $align="center">Họ và tên<Filter /></Cell>
              <Cell $yellow $bold>Số lượng</Cell>
              {colNames.slice(3).map((c, i) => (
                <Cell key={i} $yellow>{["J", "K", "N"].includes(c) && <Filter />}</Cell>
              ))}
            </Row>
            {people.map((p, i) => (
              <Row key={i}>
                <RowHead $sel={i === 0}>{i + 2}</RowHead>
                <Cell $align="right" $ls={0.2}>{p[0]}</Cell>
                <Cell $sel={i === 0} $pr={0}>
                  <CellClip>{p[1]}</CellClip>
                  {i === 0 && <FillHandle />}
                </Cell>
                {colNames.slice(2).map((c, j) => (
                  <Cell key={j} $align="right" $pr={1}>{c === "J" ? p[2] : ""}</Cell>
                ))}
              </Row>
            ))}
          </GridArea>
          <VScroll>
            <VTrack>
              <ScrollBtn><Arrow $up /></ScrollBtn>
              <VThumb />
              <VGap />
              <ScrollBtn><MiniCaret /></ScrollBtn>
            </VTrack>
          </VScroll>
        </Sheet>

        <SheetTabs>
          <NavArea><SideCaret left c="#c4c4c4" /><SideCaret c="#c4c4c4" /></NavArea>
          <TabSep />
          <SheetTab $w={68}>Sheet 2</SheetTab>
          <TabSep />
          <SheetTab $w={64}>Sheet3</SheetTab>
          <SheetTab $w={66} $active>Sheet1</SheetTab>
          <SheetTab $w={62}>Sheet2</SheetTab>
          <TabSep />
          <AddSheet>+</AddSheet>
          <HScroll>
            <HThumb />
            <HRest />
            <ScrollBtn><SideCaret /></ScrollBtn>
          </HScroll>
        </SheetTabs>

        <Status>
          Ready
          <StatusMacro><MacroIc /></StatusMacro>
          <ZoomBox>
            <ZoomSign>-</ZoomSign>
            <Slider><SliderThumb /></Slider>
            <ZoomSign>+</ZoomSign>
            <ZoomPct>100%</ZoomPct>
          </ZoomBox>
        </Status>

        <Taskbar>
          <TaskSeg $w={343} $c="#1b2a33" />
          <TaskSeg $w={48} $c="#b5662f" />
          <TaskSeg $w={50} $c="#2a3030" />
          <TaskSeg $w={40} $c="#56614f" />
          <TaskSeg $c="#20281c" />
        </Taskbar>
      </Win>

      <Logo>
        <LogoGraphic />
        <LogoWord>ThuthuatOffice</LogoWord>
        <LogoTag>TRI KỶ CỦA DÂN CÔNG SỞ</LogoTag>
      </Logo>

      <Dialog>
        <DlgTitle>
          <DlgName>Format Cells</DlgName>
          <DlgHelp>?</DlgHelp>
          <X s={12} c="#333" w={1.1} />
        </DlgTitle>
        <DlgTabs>
          <DlgTab $w={57}>Number</DlgTab>
          <DlgTab $w={72} $active>Alignment</DlgTab>
          <DlgTab $w={53}>Font</DlgTab>
          <DlgTab $w={54}>Border</DlgTab>
          <DlgTab $w={53}>Fill</DlgTab>
          <DlgTab $w={69}>Protection</DlgTab>
        </DlgTabs>
        <Pane>
          <PaneLeft>
            <Legend>Text alignment<LegendLine /></Legend>
            <Lbl $mt={5}><u>H</u>orizontal:</Lbl>
            <FieldRow>
              <Select $w={149} $mt={1}><SelectText $hl>General</SelectText><SelectArrow><Chevron /></SelectArrow></Select>
              <IndentCol>
                <Lbl $pl={0} $dis>Indent:</Lbl>
                <Spin $w={59} $mt={1}><SpinVal>0</SpinVal><SpinBtns><SpinBtn><Arrow $up /></SpinBtn><SpinBtn><Arrow /></SpinBtn></SpinBtns></Spin>
              </IndentCol>
            </FieldRow>
            <Lbl $mt={1}><u>V</u>ertical:</Lbl>
            <Select $w={149} $mt={1}><SelectText>Center</SelectText><SelectArrow><Chevron /></SelectArrow></Select>
            <CheckRow $dis $mt={1}><Check $dis />Justify distributed</CheckRow>
            <Legend $mt={5}>Text control<LegendLine /></Legend>
            <CheckRow $mt={4}><Check><SmallTick /></Check><span><u>W</u>rap text</span></CheckRow>
            <CheckRow $dis><Check $dis />Shrink to fit</CheckRow>
            <CheckRow><Check /><span><u>M</u>erge cells</span></CheckRow>
            <Legend $mt={5}>Right-to-left<LegendLine /></Legend>
            <Lbl $mt={4}><u>T</u>ext direction:</Lbl>
            <Select $w={98} $mt={1}><SelectText>Context</SelectText><SelectArrow><Chevron /></SelectArrow></Select>
          </PaneLeft>
          <OrientBox>
            <OrientLegend>Orientation</OrientLegend>
            <OrientTop>
              <VertText><span>T</span><span>e</span><span>x</span><span>t</span></VertText>
              <Dial viewBox="0 0 64 123">
                {dots.map((d, i) => <rect key={i} x={d[0] - 1} y={d[1] - 1} width="2" height="2" fill="#000" />)}
                {diamonds.map((d, i) => <path key={i} d={`M${d[0]} ${d[1] - 3.5}l3.5 3.5-3.5 3.5-3.5-3.5z`} fill="#000" />)}
                <path d="M31 62h23" stroke="#000" />
                <path d="M59 58.5l3.5 3.5-3.5 3.5-3.5-3.5z" fill="#f00" stroke="#000" strokeWidth=".5" />
                <text x="5" y="66" fontSize="11.5" fontFamily="Noto Sans" fill="#000">Text</text>
              </Dial>
            </OrientTop>
            <DegRow>
              <Spin $w={59}><SpinVal>0</SpinVal><SpinBtns><SpinBtn><Arrow $up /></SpinBtn><SpinBtn><Arrow /></SpinBtn></SpinBtns></Spin>
              <span><u>D</u>egrees</span>
            </DegRow>
          </OrientBox>
        </Pane>
        <DlgFoot>
          <DlgBtn $w={73} $def>OK</DlgBtn>
          <DlgBtn $w={74}>Cancel</DlgBtn>
        </DlgFoot>
      </Dialog>

      {marks.map((m, i) => <Mark key={i} $x={m[0]} $y={m[1]} $w={m[2]} $h={m[3]} />)}
    </Page>
  );
}
